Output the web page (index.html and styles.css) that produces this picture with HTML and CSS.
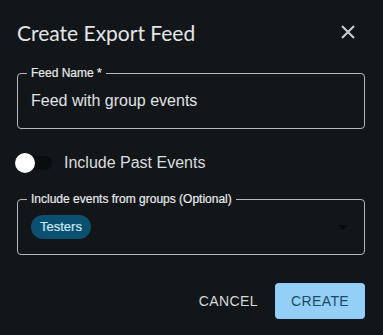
FILE: index.html
```html
<!DOCTYPE html>
<html lang="en">
<head>
  <meta charset="UTF-8" />
  <meta name="viewport" content="width=device-width, initial-scale=1.0"/>
  <title>Create Export Feed</title>
  <link rel="stylesheet" href="styles.css">
</head>
<body>

  <div class="dialog">
    <header class="dialog-header">
      <h2>Create Export Feed</h2>
      <button class="close-btn" aria-label="Close">
        <svg width="14" height="14" viewBox="0 0 14 14">
          <path d="M1 1 L13 13 M13 1 L1 13" stroke="#c6d0d8" stroke-width="2" />
        </svg>
      </button>
    </header>

    <form class="dialog-body">
      <div class="field">
        <label class="field-label">Feed Name *</label>
        <input type="text" value="Feed with group events" />
      </div>

      <label class="switch-row">
        <span class="switch">
          <span class="track"></span>
          <span class="thumb"></span>
        </span>
        Include Past Events
      </label>

      <div class="field select-field">
        <label class="field-label">Include events from groups (Optional)</label>
        <span class="chip">Testers</span>
        <span class="arrow"></span>
      </div>
    </form>

    <footer class="dialog-actions">
      <button class="btn-text">CANCEL</button>
      <button class="btn-primary">CREATE</button>
    </footer>
  </div>

</body>
</html>
```

FILE: styles.css
```css
body {
  margin: 0;
  background: #121619;
  font-family: "Liberation Sans", Arial, sans-serif;
  color: #dde0e2;
}
.dialog {
  padding: 0 18px 0 17px;
}
.dialog-header {
  display: flex;
  align-items: center;
  justify-content: space-between;
  padding-top: 16px;
  height: 32px;
}
.dialog-header h2 {
  margin: 0;
  font-family: Lato, sans-serif;
  font-weight: 400;
  font-size: 21px;
  color: #e3e5e7;
}
.close-btn {
  background: none;
  border: none;
  padding: 0;
  margin-right: 10px;
  width: 14px;
  height: 14px;
  display: flex;
  cursor: pointer;
}
.dialog-body {
  margin-top: 25px;
}
.field {
  position: relative;
  border: 1px solid #b3b7ba;
  border-radius: 4px;
  height: 54px;
  display: flex;
  align-items: center;
  padding: 0 13px;
}
.field-label {
  position: absolute;
  top: -8px;
  left: 9px;
  padding: 0 4px;
  background: #121619;
  font-size: 12px;
  line-height: 14px;
  color: #e8eaec;
  -webkit-text-stroke: 0.2px #e8eaec;
}
.field input {
  width: 100%;
  background: none;
  border: none;
  outline: none;
  padding: 0;
  font-family: inherit;
  font-size: 16px;
  color: #e0e2e4;
}
.switch-row {
  display: flex;
  align-items: center;
  gap: 11px;
  height: 38px;
  margin: 15px 0 17px;
  font-size: 16px;
  color: #dadddf;
}
.switch {
  position: relative;
  width: 38px;
  height: 20px;
  margin-left: -2px;
}
.track {
  position: absolute;
  left: 0;
  top: 3px;
  width: 37px;
  height: 14px;
  border-radius: 7px;
  background: #0a0d0f;
}
.thumb {
  position: absolute;
  left: 0;
  top: 0;
  width: 20px;
  height: 20px;
  border-radius: 50%;
  background: #ffffff;
}
.select-field {
  justify-content: space-between;
}
.chip {
  background: #0c506f;
  color: #cbe8f6;
  font-size: 13px;
  height: 24px;
  line-height: 24px;
  padding: 0 9px;
  border-radius: 12px;
  -webkit-text-stroke: 0.2px #cbe8f6;
}
.arrow {
  width: 0;
  height: 0;
  border-left: 5px solid transparent;
  border-right: 5px solid transparent;
  border-top: 5px solid #080a0b;
  margin-right: 3px;
}
.dialog-actions {
  display: flex;
  justify-content: flex-end;
  align-items: center;
  gap: 8px;
  margin-top: 28px;
}
.dialog-actions button {
  font-family: inherit;
  font-size: 14px;
  letter-spacing: 0.4px;
  height: 36px;
  border: none;
  border-radius: 4px;
  cursor: pointer;
}
.btn-text {
  background: none;
  color: #d6d9db;
  padding: 0 9px;
}
.btn-primary {
  background: #93cff6;
  color: #1c4a64;
  width: 90px;
}
```
